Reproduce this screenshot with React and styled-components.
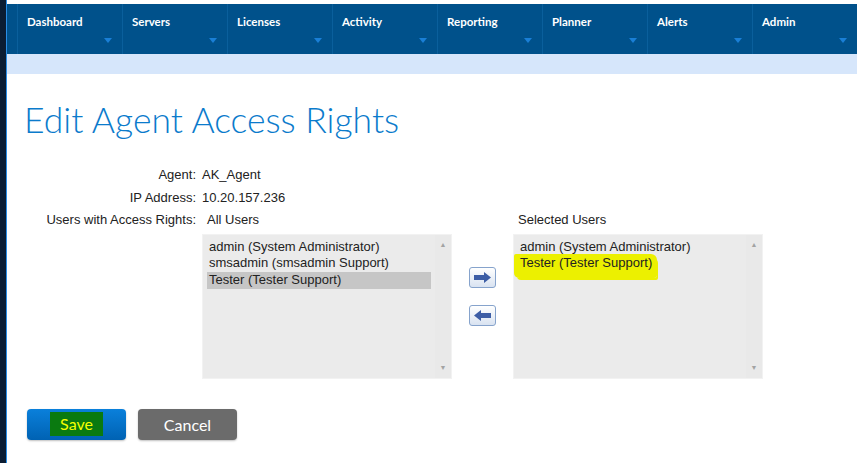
import React from 'react'
import styled, { createGlobalStyle } from 'styled-components'

const GlobalStyle = createGlobalStyle`
  html, body {
    margin: 0;
    padding: 0;
    background: #ffffff;
  }
  body {
    font-family: "Liberation Sans", Arial, sans-serif;
    overflow: hidden;
  }
`

const Page = styled.div`
  display: flex;
  width: 857px;
  height: 463px;
  overflow: hidden;
`

const DesktopEdge = styled.div`
  width: 6px;
  flex: none;
  background: #0b1d33;
  border-right: 1px solid #2a8ee6;
`

const Main = styled.div`
  flex: 1;
  display: flex;
  flex-direction: column;
  min-width: 0;
  padding-top: 4px;
`

const NavBar = styled.nav`
  display: flex;
  height: 50px;
  background: #00518b;
  padding-left: 10px;
`

const NavItem = styled.div`
  position: relative;
  width: 105px;
  flex: none;
  border-left: 1px solid #0a5f9c;
  color: #ffffff;
  font-family: Lato, "Open Sans", sans-serif;
  font-weight: 700;
  font-size: 11.5px;
  padding: 11px 0 0 9px;
  box-sizing: border-box;
`

const Caret = styled.span`
  position: absolute;
  right: 10px;
  bottom: 11px;
  width: 0;
  height: 0;
  border-left: 4px solid transparent;
  border-right: 4px solid transparent;
  border-top: 5px solid #1a7fd6;
`

const SubBar = styled.div`
  height: 20px;
  background: #d6e6fb;
`

const Title = styled.h1`
  margin: 24px 0 0 17px;
  font-family: Lato, "Open Sans", sans-serif;
  font-weight: 300;
  font-size: 35.5px;
  line-height: 44px;
  color: #0b7bcc;
`

const Form = styled.div`
  display: grid;
  grid-template-columns: 189px 1fr;
  column-gap: 6px;
  margin-top: 22px;
  font-size: 13px;
  color: #222;
`

const Label = styled.div`
  text-align: right;
  line-height: 22.5px;
`

const Value = styled.div`
  line-height: 22.5px;
`

const Lists = styled.div`
  display: flex;
  align-items: flex-start;
`

const ListColumn = styled.div`
  display: flex;
  flex-direction: column;
  width: 250px;
`

const ListHeader = styled.div`
  line-height: 22.5px;
  padding-left: 5px;
  margin-bottom: 2px;
`

const ListBox = styled.div`
  position: relative;
  height: 145px;
  background: #ebebeb;
  border: 1px solid #f2f2f2;
  box-sizing: border-box;
  padding: 4px 20px 0 4px;
`

const Scroll = styled.div`
  position: absolute;
  top: 0;
  right: 0;
  bottom: 0;
  width: 16px;
  background: #e9e9e9;
  display: flex;
  flex-direction: column;
  justify-content: space-between;
  align-items: center;
  padding: 6px 0;
  box-sizing: border-box;
  color: #a3a3a3;
  font-size: 7px;
  line-height: 8px;
`

const Option = styled.div`
  line-height: 16.8px;
  padding-left: 2px;
  background: ${p => (p.$selected ? '#c6c6c6' : 'transparent')};
  white-space: nowrap;
  color: #222;
`

const Marker = styled.span`
  background: #ecf000;
  padding: 1px 5px 8px 6px;
  margin-left: -6px;
  border-radius: 2px 6px 3px 5px;
  box-shadow: 2px 3px 0 -1px #ecf000;
`

const Movers = styled.div`
  width: 61px;
  flex: none;
  display: flex;
  flex-direction: column;
  align-items: center;
  gap: 17px;
  padding-top: 58px;
`

const MoveButton = styled.button`
  width: 27px;
  height: 21px;
  padding: 0;
  display: flex;
  align-items: center;
  justify-content: center;
  border: 1px solid #86a3cc;
  border-radius: 3px;
  background: linear-gradient(#ffffff, #d9e3f1);
`

const Actions = styled.div`
  display: flex;
  gap: 12px;
  margin: 30px 0 0 20px;
`

const ActionButton = styled.button`
  width: 99px;
  height: 31px;
  border: none;
  border-radius: 4px;
  font-family: Lato, "Open Sans", sans-serif;
  font-size: 16px;
  color: #ffffff;
  background: ${p => (p.$primary ? 'linear-gradient(#0a80db, #0062b3)' : '#6b6b6b')};
  box-shadow: 0 1px 2px rgba(0, 0, 0, 0.25);
`

const SaveMark = styled.span`
  display: inline-block;
  background: #0a7a10;
  color: #f5ff00;
  padding: 2px 10px 3px;
`

const navItems = ['Dashboard', 'Servers', 'Licenses', 'Activity', 'Reporting', 'Planner', 'Alerts', 'Admin']

const Arrow = ({ left }) => (
  <svg width="19" height="13" viewBox="0 0 19 13">
    <path
      d={left ? 'M1 6.5 L8 1 L8 4 L18 4 L18 9 L8 9 L8 12 Z' : 'M18 6.5 L11 1 L11 4 L1 4 L1 9 L11 9 L11 12 Z'}
      fill="#3d5ea6"
    />
  </svg>
)

export default function App() {
  return (
    <Page>
      <GlobalStyle />
      <DesktopEdge />
      <Main>
        <NavBar>
          {navItems.map(item => (
            <NavItem key={item}>
              {item}
              <Caret />
            </NavItem>
          ))}
        </NavBar>
        <SubBar />
        <Title>Edit Agent Access Rights</Title>
        <Form>
          <Label>Agent:</Label>
          <Value>AK_Agent</Value>
          <Label>IP Address:</Label>
          <Value>10.20.157.236</Value>
          <Label>Users with Access Rights:</Label>
          <Lists>
            <ListColumn>
              <ListHeader>All Users</ListHeader>
              <ListBox>
                <Option>admin (System Administrator)</Option>
                <Option>smsadmin (smsadmin Support)</Option>
                <Option $selected>Tester (Tester Support)</Option>
                <Scroll><span>▲</span><span>▼</span></Scroll>
              </ListBox>
            </ListColumn>
            <Movers>
              <MoveButton><Arrow /></MoveButton>
              <MoveButton><Arrow left /></MoveButton>
            </Movers>
            <ListColumn>
              <ListHeader>Selected Users</ListHeader>
              <ListBox>
                <Option>admin (System Administrator)</Option>
                <Option><Marker>Tester (Tester Support)</Marker></Option>
                <Scroll><span>▲</span><span>▼</span></Scroll>
              </ListBox>
            </ListColumn>
          </Lists>
        </Form>
        <Actions>
          <ActionButton $primary><SaveMark>Save</SaveMark></ActionButton>
          <ActionButton>Cancel</ActionButton>
        </Actions>
      </Main>
    </Page>
  )
}
